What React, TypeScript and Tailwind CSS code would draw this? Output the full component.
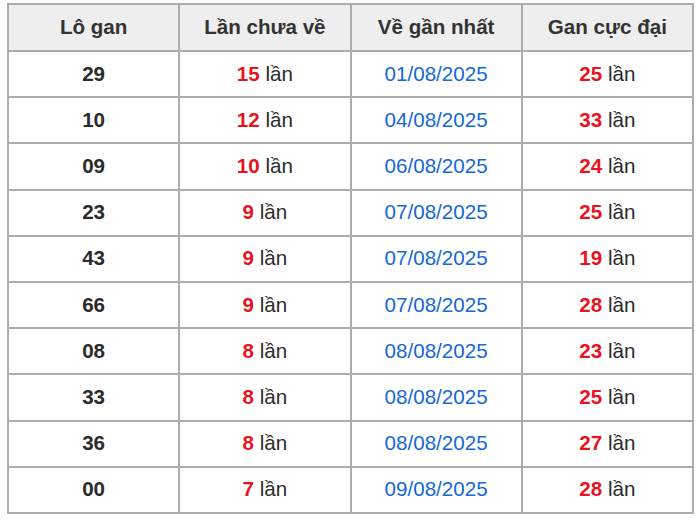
const rows: [string, number, string, number][] = [
  ["29", 15, "01/08/2025", 25],
  ["10", 12, "04/08/2025", 33],
  ["09", 10, "06/08/2025", 24],
  ["23", 9, "07/08/2025", 25],
  ["43", 9, "07/08/2025", 19],
  ["66", 9, "07/08/2025", 28],
  ["08", 8, "08/08/2025", 23],
  ["33", 8, "08/08/2025", 25],
  ["36", 8, "08/08/2025", 27],
  ["00", 7, "09/08/2025", 28],
];

const headers = ["Lô gan", "Lần chưa về", "Về gần nhất", "Gan cực đại"];

export default function App() {
  return (
    <div className="bg-white w-[700px] h-[522px] pt-[3px] pl-[7px] font-['Liberation_Sans',Arial,sans-serif] text-[20.6px] text-[#2b2b2b]">
      <table className="w-[687px] border-collapse table-fixed">
        <thead>
          <tr className="h-[47px] bg-[#eeeeee]">
            {headers.map((h) => (
              <th key={h} className="border-2 border-[#acacac] font-bold text-center text-[#333] pb-[1px]">
                {h}
              </th>
            ))}
          </tr>
        </thead>
        <tbody>
          {rows.map(([lo, miss, date, max], i) => (
            <tr key={i} className="h-[46.2px]">
              <td className="border-2 border-[#acacac] text-center font-bold">{lo}</td>
              <td className="border-2 border-[#acacac] text-center">
                <span className="font-bold text-[#e8131f]">{miss}</span> lần
              </td>
              <td className="border-2 border-[#acacac] text-center text-[#1668d6]">{date}</td>
              <td className="border-2 border-[#acacac] text-center">
                <span className="font-bold text-[#e8131f]">{max}</span> lần
              </td>
            </tr>
          ))}
        </tbody>
      </table>
    </div>
  );
}
